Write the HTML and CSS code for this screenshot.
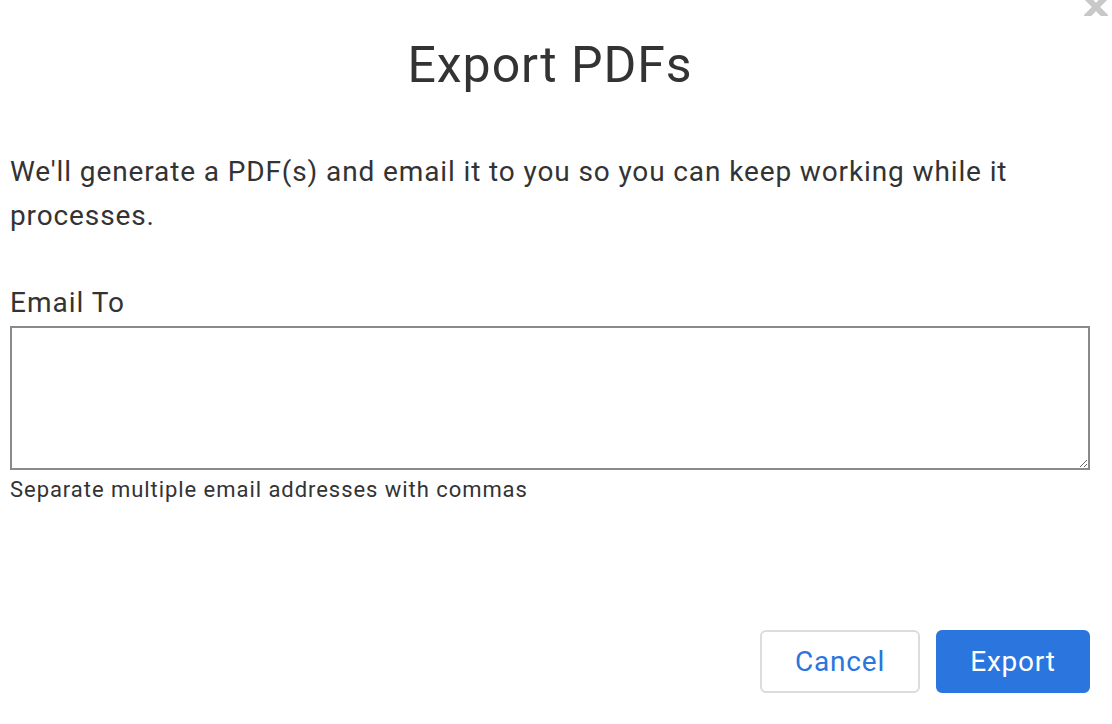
FILE: index.html
```html
<!DOCTYPE html>
<html>
<head>
<meta charset="utf-8">
<link rel="stylesheet" href="styles.css">
</head>
<body>
<div class="modal">
  <button class="close" aria-label="Close"><svg width="24" height="24" viewBox="0 0 24 24"><path d="M3 -2 L21 16 M21 -2 L3 16" stroke="#c8c8c8" stroke-width="6" stroke-linecap="round"/></svg></button>
  <h1 class="title">Export PDFs</h1>
  <p class="intro">We'll generate a PDF(s) and email it to you so you can keep working while it processes.</p>
  <div class="field">
    <label class="label" for="emails">Email To</label>
    <textarea id="emails" class="input"></textarea>
    <div class="help">Separate multiple email addresses with commas</div>
  </div>
  <div class="actions">
    <button class="btn btn-cancel">Cancel</button>
    <button class="btn btn-primary">Export</button>
  </div>
</div>
</body>
</html>
```
FILE: styles.css
```css
* { box-sizing: border-box; }
html, body { margin: 0; padding: 0; background: #fff; }
body { font-family: Roboto, "Noto Sans", sans-serif; color: #333; }
.modal {
  position: relative;
  width: 1112px;
  height: 724px;
  padding: 0 22px 0 10px;
  display: flex;
  flex-direction: column;
}
.close {
  position: absolute;
  top: 0;
  right: 4px;
  width: 24px;
  height: 16px;
  padding: 0;
  border: 0;
  background: none;
  overflow: hidden;
}
.close svg { display: block; }
.title {
  margin: 35px 0 0;
  font-size: 50px;
  font-weight: 400;
  line-height: 60px;
  letter-spacing: 0.95px;
  text-align: center;
  color: #333;
}
.intro {
  margin: 55px 0 0;
  font-size: 28px;
  line-height: 44px;
  letter-spacing: 0.88px;
  color: #333;
}
.field { margin-top: 47px; display: flex; flex-direction: column; }
.label { font-size: 28px; line-height: 36px; letter-spacing: 1px; color: #333; }
.input {
  display: block;
  margin-top: 5px;
  width: 100%;
  height: 144px;
  border: 2px solid #8a8a8a;
  border-radius: 0;
  resize: vertical;
  font: inherit;
}
.help { margin-top: 5px; font-size: 22px; line-height: 30px; letter-spacing: 0.95px; color: #333; }
.actions {
  margin-top: auto;
  margin-bottom: 31px;
  display: flex;
  justify-content: flex-end;
  gap: 16px;
}
.btn {
  height: 63px;
  padding: 0;
  font-family: inherit;
  font-size: 28px;
  letter-spacing: 0.8px;
  border-radius: 6px;
  cursor: pointer;
}
.btn-cancel {
  width: 160px;
  background: #fff;
  border: 2px solid #dcdcdc;
  color: #2a75de;
}
.btn-primary {
  width: 154px;
  background: #2a75de;
  border: 2px solid #2a75de;
  color: #fff;
}
```
